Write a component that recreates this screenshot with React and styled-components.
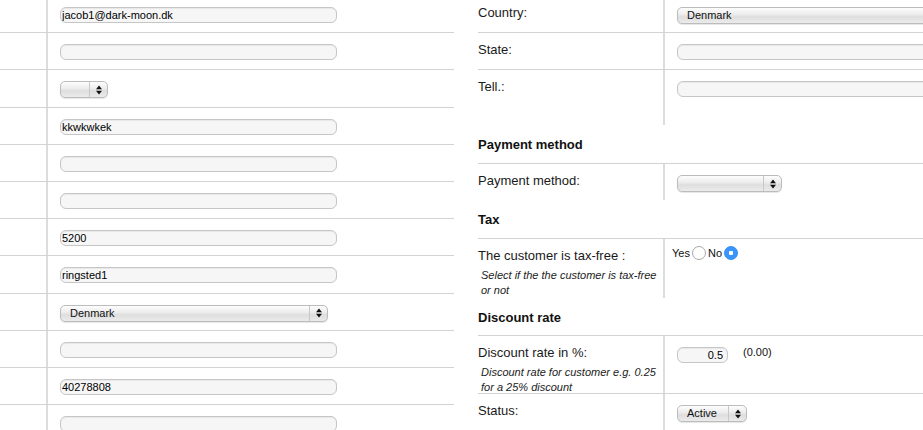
import React from 'react';
import styled, {createGlobalStyle} from "styled-components";

const GlobalStyle = createGlobalStyle`
  html, body {
    margin: 0;
    padding: 0;
    background: #fff;
    overflow: hidden;
  }
  body {
    font-family: "Liberation Sans", Arial, Helvetica, sans-serif;
    color: #1a1a1a;
  }
`

const Page = styled.div`
  display: flex;
  align-items: flex-start;
  gap: 24px;
  margin-top: -5px;
  width: 1100px;
`

const Panel = styled.div`
  flex-shrink: 0;
  width: ${({$w}) => $w}px;
  display: flex;
  flex-direction: column;
`

const Row = styled.div`
  display: flex;
  box-sizing: border-box;
  height: ${({$h}) => $h || 37.2}px;
  border-top: 1px solid #d3d3d3;
`

const LabelCell = styled.div`
  flex-shrink: 0;
  box-sizing: border-box;
  width: ${({$w}) => $w}px;
  border-right: 2px solid #dcdcdc;
  padding-top: 9px;
  font-size: 13px;
  line-height: 15px;
  color: #1a1a1a;
`

const Help = styled.div`
  margin-top: 5px;
  padding-left: 3px;
  font-size: 11px;
  font-style: italic;
  line-height: 15px;
  color: #222;
`

const ValueCell = styled.div`
  flex: 1;
  display: flex;
  align-items: flex-start;
  padding: 11px 0 0 12px;
  font-size: 11px;
`

const Heading = styled.div`
  box-sizing: border-box;
  height: 37.7px;
  padding-top: 12px;
  font-size: 13px;
  line-height: 15px;
  font-weight: bold;
  color: #111;
`

const Input = styled.input`
  box-sizing: border-box;
  width: ${({$w}) => $w || 277}px;
  height: 16px;
  margin: 0;
  padding: 0 ${({$right}) => $right ? "4px" : "1px"} 0 1px;
  border: 1px solid #c6c6c6;
  border-radius: 6px;
  background: #f6f6f6;
  box-shadow: inset 0 1px 1px rgba(0,0,0,.06);
  font-family: inherit;
  font-size: 11px;
  color: #000;
  text-align: ${({$right}) => $right ? "right" : "left"};

  &:focus {
    outline: none;
  }
`

const SelectBox = styled.div`
  box-sizing: border-box;
  display: inline-flex;
  align-items: stretch;
  width: ${({$w}) => $w}px;
  height: 17px;
  border: 1px solid #bcbcbc;
  border-radius: 5px;
  background: linear-gradient(#fdfdfd, #eeeeee 40%, #dedede 60%, #ebebeb);
  box-shadow: 0 1px 1px rgba(0,0,0,.1);
  font-size: 11px;
  color: #111;
`

const SelectValue = styled.span`
  flex: 1;
  padding-left: 9px;
  line-height: 15px;
  white-space: nowrap;
  overflow: hidden;
`

const SelectArrow = styled.span`
  width: 17px;
  border-left: 1px solid #c8c8c8;
  display: flex;
  align-items: center;
  justify-content: center;
`

const Note = styled.span`
  margin: -1px 0 0 15px;
  font-size: 11px;
  color: #111;
`

const RadioGroup = styled.div`
  display: flex;
  align-items: center;
  margin: -4px 0 0 -5px;
  font-size: 11px;
  color: #111;
`

const Radio = styled.input`
  appearance: none;
  box-sizing: border-box;
  width: 14px;
  height: 14px;
  margin: 0 2px 0 2px;
  border-radius: 50%;
  border: 1px solid #a8a8a8;
  background: #fff;

  &:checked {
    border-color: #2f8cf6;
    background: radial-gradient(circle, #fff 0 2px, #3a94fb 2.5px);
  }
`

const Select = ({w, value}) => (
    <SelectBox $w={w}>
        <SelectValue>{value}</SelectValue>
        <SelectArrow>
            <svg width="6" height="10" viewBox="0 0 6 10">
                <path d="M0 4.2 L3 0.5 L6 4.2 Z M0 5.8 L3 9.5 L6 5.8 Z" fill="#111"/>
            </svg>
        </SelectArrow>
    </SelectBox>
)

const leftRows = [
    {value: "jacob1@dark-moon.dk"},
    {value: ""},
    {select: true, w: 48, value: ""},
    {value: "kkwkwkek"},
    {value: ""},
    {value: ""},
    {value: "5200"},
    {value: "ringsted1"},
    {select: true, w: 268, value: "Denmark"},
    {value: ""},
    {value: "40278808"},
    {value: ""},
]

const App = () => {
    return (
        <>
            <GlobalStyle/>
            <Page>
                <Panel $w={454}>
                    {leftRows.map((r, i) => (
                        <Row key={i}>
                            <LabelCell $w={48}/>
                            <ValueCell>
                                {r.select
                                    ? <Select w={r.w} value={r.value}/>
                                    : <Input defaultValue={r.value} readOnly/>}
                            </ValueCell>
                        </Row>
                    ))}
                </Panel>

                <Panel $w={560}>
                    <Row>
                        <LabelCell $w={187}>Country:</LabelCell>
                        <ValueCell><Select w={300} value="Denmark"/></ValueCell>
                    </Row>
                    <Row>
                        <LabelCell $w={187}>State:</LabelCell>
                        <ValueCell><Input readOnly/></ValueCell>
                    </Row>
                    <Row $h={56}>
                        <LabelCell $w={187}>Tell.:</LabelCell>
                        <ValueCell><Input readOnly/></ValueCell>
                    </Row>

                    <Heading>Payment method</Heading>
                    <Row $h={37}>
                        <LabelCell $w={187}>Payment method:</LabelCell>
                        <ValueCell><Select w={105} value=""/></ValueCell>
                    </Row>

                    <Heading>Tax</Heading>
                    <Row $h={60}>
                        <LabelCell $w={187}>
                            The customer is tax-free :
                            <Help>Select if the the customer is tax-free or not</Help>
                        </LabelCell>
                        <ValueCell>
                            <RadioGroup>
                                Yes<Radio type="radio" name="taxfree"/>No<Radio type="radio" name="taxfree" defaultChecked/>
                            </RadioGroup>
                        </ValueCell>
                    </Row>

                    <Heading>Discount rate</Heading>
                    <Row $h={58}>
                        <LabelCell $w={187}>
                            Discount rate in %:
                            <Help>Discount rate for customer e.g. 0.25 for a 25% discount</Help>
                        </LabelCell>
                        <ValueCell>
                            <Input $w={51} $right defaultValue="0.5" readOnly/>
                            <Note>(0.00)</Note>
                        </ValueCell>
                    </Row>
                    <Row $h={60}>
                        <LabelCell $w={187}>Status:</LabelCell>
                        <ValueCell><Select w={70} value="Active"/></ValueCell>
                    </Row>
                </Panel>
            </Page>
        </>
    );
};

export default App;
